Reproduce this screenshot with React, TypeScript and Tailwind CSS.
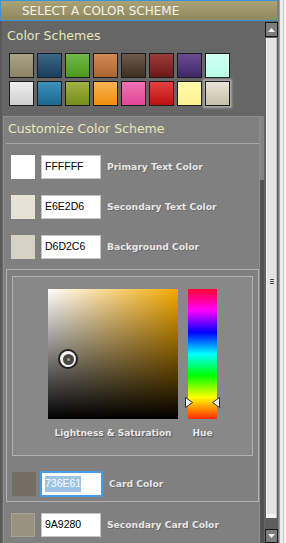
const schemes: [string, string][][] = [
  [
    ['#aaa487', '#8a8366'],
    ['#3b6686', '#1a3f5e'],
    ['#72b944', '#4a9a1e'],
    ['#d18a52', '#ae6630'],
    ['#6b5b49', '#3d2f20'],
    ['#9c3c3c', '#6e1717'],
    ['#6b4b92', '#3f2769'],
    ['#d2fff2', '#b6ffe8'],
  ],
  [
    ['#eeeeee', '#cfcfcf'],
    ['#3c92ba', '#196990'],
    ['#a2b243', '#768e17'],
    ['#f9b252', '#ef8f0e'],
    ['#f172b2', '#df4796'],
    ['#e24242', '#bf0f0f'],
    ['#fffbaa', '#fff08e'],
    ['#e8e4da', '#c6bea7'],
  ],
]

const sans = "font-['DejaVu_Sans',Verdana,sans-serif]"

function ColorRow({ color, value, label }: { color: string; value: string; label: string }) {
  return (
    <div className="flex items-center h-[24px] pl-[7px]">
      <div className="w-[24px] h-[24px]" style={{ backgroundColor: color }} />
      <div className="ml-[6px] w-[60px] h-[24px] bg-white border border-[#c4c4c4] pl-[3px] flex items-center text-[10.5px] text-black font-['Liberation_Sans',Arial,sans-serif]">
        {value}
      </div>
      <span className={`ml-[6px] text-[9.2px] font-bold text-[#e6e6e6] [text-shadow:1px_1px_0_#6a6a6a] ${sans}`}>
        {label}
      </span>
    </div>
  )
}

function Arrow({ dir }: { dir: 'right' | 'left' }) {
  return (
    <svg width="8" height="11" viewBox="0 0 8 11" className="block">
      {dir === 'right' ? (
        <path d="M0.5 0.5 L7.5 5.5 L0.5 10.5 Z" fill="#f4f4f4" stroke="#2a2a2a" strokeWidth="1" />
      ) : (
        <path d="M7.5 0.5 L0.5 5.5 L7.5 10.5 Z" fill="#f4f4f4" stroke="#2a2a2a" strokeWidth="1" />
      )}
    </svg>
  )
}

export default function App() {
  return (
    <div className="w-[286px] h-[543px] overflow-hidden flex bg-[#666666]">
      <div className="w-[278px] flex flex-col">
        {/* header */}
        <div className="h-[21px] border border-[#3b93d9] bg-[linear-gradient(to_bottom,#aaa277,#8f875d)] flex items-center pl-[21px]">
          <span className={`text-[12px] text-[#f3f3e8] ${sans}`}>SELECT A COLOR SCHEME</span>
        </div>

        <div className="flex flex-1 min-h-0">
          {/* main column */}
          <div className="w-[265px] overflow-hidden bg-[#666666] border-l-2 border-[#5a5a5a]">
            <div className={`mt-[7px] ml-[5px] text-[12.5px] leading-[15px] text-[#e9e6bd] ${sans}`}>Color Schemes</div>

            <div className="mt-[10px] ml-[7px] grid grid-cols-[repeat(8,25px)] gap-[3px]">
              {schemes.flat().map(([a, b], i) => (
                <div
                  key={i}
                  className={`w-[25px] h-[25px] border border-[#1c1c1c] ${
                    i === 15 ? 'shadow-[0_0_2px_2px_#a9a9a9]' : ''
                  }`}
                  style={{ background: `linear-gradient(to bottom, ${a}, ${b})` }}
                />
              ))}
            </div>

            {/* customize panel */}
            <div className="mt-[10px] ml-[1px] flex">
              <div className="w-[257px] h-[500px] bg-[#808080] border border-[#8e8e8e]">
                <div className={`mt-[4px] ml-[4px] text-[12.5px] leading-[15px] text-[#ebe8b8] ${sans}`}>
                  Customize Color Scheme
                </div>
                <div className="mt-[7px] ml-[2px] h-[1px] bg-[#a8a8a8]" />

                <div className="mt-[11px] flex flex-col gap-[16px]">
                  <ColorRow color="#ffffff" value="FFFFFF" label="Primary Text Color" />
                  <ColorRow color="#e6e2d6" value="E6E2D6" label="Secondary Text Color" />
                  <ColorRow color="#d6d2c6" value="D6D2C6" label="Background Color" />
                </div>

                {/* picker box */}
                <div className="mt-[10px] ml-[2px] w-[253px] border border-[#b2b2b2] px-[5px] pt-[6px] pb-[4px]">
                  <div className="border border-[#b2b2b2] bg-[#888888] pt-[12px] pb-[15px]">
                    <div className="flex justify-center gap-[10px]">
                      <div className="flex flex-col items-center">
                        <div className="relative w-[130px] h-[130px] bg-[linear-gradient(to_bottom,rgba(0,0,0,0),#000),linear-gradient(to_right,#ffffff,#f4a900)]">
                          <div className="absolute left-[10px] top-[60px] w-[20px] h-[20px] rounded-full bg-[#1e1e1e] flex items-center justify-center">
                            <div className="w-[16px] h-[16px] rounded-full bg-[#f2f2f2] flex items-center justify-center">
                              <div className="w-[11px] h-[11px] rounded-full bg-[#4a4540] flex items-center justify-center">
                                <div className="w-[3px] h-[3px] rounded-full bg-[#a8a49c]" />
                              </div>
                            </div>
                          </div>
                        </div>
                        <span className={`mt-[7px] text-[9px] leading-[14px] font-bold text-[#e8e8e8] [text-shadow:1px_1px_1px_#555] ${sans}`}>
                          Lightness &amp; Saturation
                        </span>
                      </div>
                      <div className="flex flex-col items-center">
                        <div className="relative w-[29px] h-[130px] bg-[linear-gradient(to_bottom,#ff0030,#ff00ff,#0000ff,#00ffff,#00ff00,#ffff00,#ff2a00)]">
                          <div className="absolute left-[-3px] top-[108px]">
                            <Arrow dir="right" />
                          </div>
                          <div className="absolute right-[-3px] top-[108px]">
                            <Arrow dir="left" />
                          </div>
                        </div>
                        <span className={`mt-[7px] text-[9px] leading-[14px] font-bold text-[#e8e8e8] [text-shadow:1px_1px_1px_#555] ${sans}`}>
                          Hue
                        </span>
                      </div>
                    </div>
                  </div>

                  <div className="mt-[15px] flex items-center h-[26px]">
                    <div className="w-[24px] h-[24px] bg-[#736e61]" />
                    <div className="ml-[4px] w-[63px] h-[26px] bg-white border-2 border-[#4b9be0] pl-[3px] flex items-center text-[10.5px] font-['Liberation_Sans',Arial,sans-serif]">
                      <span className="bg-[#9cc3e6] text-white">736E61</span>
                    </div>
                    <span className={`ml-[6px] text-[9.2px] font-bold text-[#e6e6e6] [text-shadow:1px_1px_0_#6a6a6a] ${sans}`}>
                      Card Color
                    </span>
                  </div>
                </div>

                <div className="mt-[11px]">
                  <div className="flex items-center h-[24px] pl-[7px]">
                    <div className="w-[24px] h-[24px] bg-[#9a9280] border border-[#a8a290]" />
                    <div className="ml-[6px] w-[60px] h-[24px] bg-white border border-[#c4c4c4] pl-[3px] flex items-center text-[10.5px] text-black font-['Liberation_Sans',Arial,sans-serif]">
                      9A9280
                    </div>
                    <span className={`ml-[6px] text-[9.2px] font-bold text-[#e6e6e6] [text-shadow:1px_1px_0_#6a6a6a] ${sans}`}>
                      Secondary Card Color
                    </span>
                  </div>
                </div>
              </div>

              {/* inner scroll strip */}
              <div className="w-[4px] flex flex-col">
                <div className="h-[64px] bg-[#858585]" />
                <div className="flex-1 bg-[#535353]" />
              </div>
            </div>
          </div>

          {/* scrollbar */}
          <div className="w-[13px] flex flex-col bg-[#5e5e5e] pt-[1px]">
            <div className="h-[15px] border border-[#1a1a1a] bg-[#7c7c7c] flex items-center justify-center">
              <svg width="7" height="4" viewBox="0 0 7 4">
                <path d="M0 4 L3.5 0 L7 4 Z" fill="#f4f4f4" />
              </svg>
            </div>
            <div className="flex-1 mx-[1px] mt-[1px] bg-[#e4e4e4] border-l border-[#f6f6f6] border-r border-r-[#bdbdbd] flex flex-col">
              <div className="h-[241px]" />
              <div className="flex flex-col items-center gap-[1px]">
                <div className="w-[4px] h-[1px] bg-[#444]" />
                <div className="w-[4px] h-[1px] bg-[#444]" />
                <div className="w-[4px] h-[1px] bg-[#444]" />
              </div>
              <div className="flex-1" />
              <div className="h-[4px] bg-[#f4f4f4]" />
            </div>
            <div className="h-[11px]" />
            <div className="h-[14px] border border-[#1a1a1a] bg-[#7c7c7c] flex items-center justify-center">
              <svg width="7" height="4" viewBox="0 0 7 4">
                <path d="M0 0 L3.5 4 L7 0 Z" fill="#f4f4f4" />
              </svg>
            </div>
          </div>
        </div>
      </div>

      {/* right edge */}
      <div className="w-[8px] flex border-l border-[#7a7a7a]">
        <div className="w-[1px] bg-[#a0a0a0]" />
        <div className="w-[3px] bg-[#ececec]" />
        <div className="w-[1px] bg-[#c4c4c4]" />
        <div className="flex-1 bg-[#f4f4f4]" />
      </div>
    </div>
  )
}
